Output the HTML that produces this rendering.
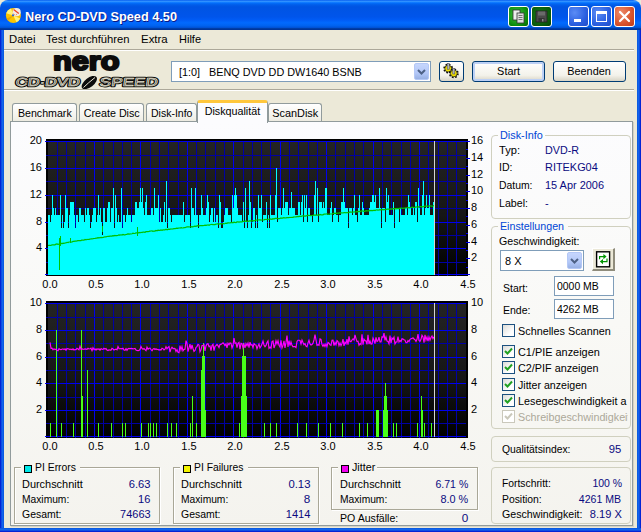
<!DOCTYPE html>
<html><head><meta charset="utf-8"><title>Nero CD-DVD Speed 4.50</title>
<style>
*{box-sizing:border-box;margin:0;padding:0}
html,body{width:641px;height:532px;overflow:hidden;background:#ece9d8}
body{font-family:"Liberation Sans",sans-serif;font-size:11px;color:#000;position:relative}
.abs,.t,.tk,.v{position:absolute;white-space:nowrap}
.t{transform-origin:0 50%}.v{transform-origin:0 50%}.v.r{transform-origin:100% 50%}
.c{display:inline-block;transform-origin:50% 50%;white-space:nowrap}
.t{font-size:11px;line-height:14px}
.v{font-size:11px;line-height:14px;color:#0a0a80}
.tk{font-size:11px;line-height:14px}
.xc{width:24px;text-align:center}
#win{position:absolute;left:0;top:0;width:641px;height:532px;background:#ece9d8}
#title{position:absolute;left:0;top:0;width:641px;height:30px;border-radius:8px 8px 0 0;
background:linear-gradient(to bottom,#0058ee 0%,#3593ff 4%,#288eff 6%,#127dff 8%,#036ffc 10%,#0262ee 14%,#0057e5 20%,#0054e3 24%,#0055eb 56%,#005bf5 66%,#026afe 76%,#0062ef 86%,#0052d6 92%,#0040ab 94%,#003092 100%)}
#title .cap{position:absolute;left:24.7px;top:8.5px;color:#fff;font-weight:bold;font-size:13.7px;line-height:16px;text-shadow:1px 1px 0 #0a1883;transform-origin:0 50%;white-space:nowrap}
.bl{position:absolute;left:0;top:30px;width:4px;height:502px;background:linear-gradient(to right,#0019cf 0%,#0831d9 25%,#166aee 50%,#0855dd 100%)}
.br{position:absolute;left:637px;top:30px;width:4px;height:502px;background:linear-gradient(to left,#0019cf 0%,#0831d9 25%,#166aee 50%,#0855dd 100%)}
.bb{position:absolute;left:0;top:528px;width:641px;height:4px;background:linear-gradient(to top,#0019cf 0%,#0831d9 25%,#166aee 50%,#0855dd 100%)}
.cb{position:absolute;top:6px;width:21px;height:21px;border:1px solid #fff;border-radius:3px}
.menu{position:absolute;top:32px;font-size:11px;line-height:14px;transform-origin:0 50%;white-space:nowrap}
.hsep{position:absolute;left:4px;width:630px;height:2px;border-top:1px solid #aca899;border-bottom:1px solid #fff}
.combo{position:absolute;background:#fff;border:1px solid #7f9db9}
.dd{position:absolute;width:15px;height:17px;border-radius:2px;border:1px solid #b4c8f6;background:linear-gradient(to bottom,#c6d6fd,#b3c8f8 60%,#98b1e4)}
.btn{position:absolute;border:1px solid #003c74;border-radius:3px;background:linear-gradient(to bottom,#fff 0%,#f3f2ea 70%,#d8d4c5 100%);text-align:center;font-size:11px;line-height:19px}
.tab{position:absolute;top:103px;height:19px;border:1px solid #919b9c;border-bottom:none;border-radius:3px 3px 0 0;background:linear-gradient(to bottom,#fff,#f1f0e8 80%,#ebe9dd);font-size:11px;line-height:19px;text-align:center}
.tab.sel{top:100px;height:23px;background:#fcfcfe;border-top:3px solid #ffc73c;line-height:17px;z-index:3;border-top-left-radius:3px;border-top-right-radius:3px}
#panel{position:absolute;left:10px;top:121px;width:623px;height:405px;border:1px solid #919b9c;box-shadow:1px 1px 0 #d5d2c4;background:linear-gradient(to bottom,#fcfcfe 0%,#f9f9f6 50%,#f4f3ee 100%)}
.grp{position:absolute;border:1px solid #d0d0bf;border-radius:4px}
.grp.sq{border-radius:0;border-color:#a9a797;box-shadow:inset 1px 1px 0 #fff,1px 1px 0 #fff}
.grp .lg{position:absolute;left:6px;top:-8px;background:#fbfbf8;color:#0046d5;font-size:11px;line-height:14px;padding:0 2px;white-space:nowrap}
.grp .lg.blk{color:#000}
.inp{position:absolute;background:#fff;border:1px solid #7f9db9;font-size:11px;line-height:19px;padding-left:2.3px;white-space:nowrap}
.chk{position:absolute;width:13px;height:13px;border:1px solid #1c5180;background:linear-gradient(135deg,#dcdcd7,#fff 70%)}
.chk svg{position:absolute;left:1px;top:1px}
.sw{display:inline-block;width:8px;height:8px;border:1px solid #000;vertical-align:-1.5px;margin-right:2.5px;margin-left:1px}
</style></head><body>
<div id="win">
<div id="title">
  <svg class="abs" style="left:5px;top:7px" width="17" height="17" viewBox="0 0 17 17"><circle cx="8.4" cy="8.5" r="7.5" fill="#fcc400"/><path d="M8.4 8.5L1.2 6.2A7.5 7.5 0 0 1 6 1.4Z" fill="#fff27a"/><path d="M8.4 8.5L15.2 11.5A7.5 7.5 0 0 1 11.5 15.3Z" fill="#fff27a"/><path d="M8.4 8.5L3.2 13.8A7.5 7.5 0 0 1 1.5 11.5Z" fill="#e8a800"/><circle cx="11.6" cy="5.2" r="4.1" fill="#f1ede6"/><path d="M8.6 2.4L13.8 6.4" stroke="#f04020" stroke-width="1.3"/><path d="M8.5 6.5l1.2 1.6M11 8.3l.8-1.4" stroke="#f07850" stroke-width=".8"/><circle cx="8" cy="8.3" r="1.1" fill="#2a62d8"/></svg>
  <div class="cap" style="transform:scaleX(0.9294)">Nero CD-DVD Speed 4.50</div>
  <div class="cb" style="left:508px;background:radial-gradient(circle at 40% 40%,#3fc03f,#0a8a0a 70%,#066006)"><svg width="19" height="19" viewBox="0 0 19 19"><rect x="4" y="3" width="7" height="10" fill="#eee" stroke="#333" stroke-width=".8"/><rect x="8" y="6" width="7" height="10" fill="#ddd" stroke="#333" stroke-width=".8"/><path d="M9.5 8.5h4M9.5 10.5h4M9.5 12.5h4" stroke="#555" stroke-width=".8"/></svg></div>
  <div class="cb" style="left:531px;background:radial-gradient(circle at 40% 40%,#187a18,#0a5a0a 70%,#053f05)"><svg width="19" height="19" viewBox="0 0 19 19"><rect x="4" y="4" width="11" height="11" fill="#4a4a4a" stroke="#222" stroke-width=".8"/><rect x="6" y="4.5" width="7" height="4" fill="#6a6a6a"/><rect x="6.5" y="11" width="6" height="4" fill="#333"/><rect x="10" y="12" width="1.5" height="2.5" fill="#888"/></svg></div>
  <div class="cb" style="left:568px;background:radial-gradient(circle at 30% 30%,#5b8cf5,#2a5fe0 60%,#1f4cc8)"><div class="abs" style="left:5px;top:12px;width:7px;height:3px;background:#fff"></div></div>
  <div class="cb" style="left:591px;background:radial-gradient(circle at 30% 30%,#5b8cf5,#2a5fe0 60%,#1f4cc8)"><div class="abs" style="left:4px;top:4px;width:11px;height:11px;border:1px solid #fff;border-top-width:3px"></div></div>
  <div class="cb" style="left:614px;background:radial-gradient(circle at 30% 30%,#ee8a6a,#d9532c 60%,#c03a18)"><svg width="19" height="19" viewBox="0 0 19 19"><path d="M5 5L14 14M14 5L5 14" stroke="#fff" stroke-width="2.2" stroke-linecap="round"/></svg></div>
</div>
<div class="bl"></div><div class="br"></div><div class="bb"></div>

<div class="menu" style="transform:scaleX(1.0277);left:8.5px">Datei</div>
<div class="menu" style="transform:scaleX(1.0191);left:46.2px">Test durchführen</div>
<div class="menu" style="transform:scaleX(1.0394);left:140.7px">Extra</div>
<div class="menu" style="transform:scaleX(0.9993);left:178.8px">Hilfe</div>
<div class="hsep" style="top:49px"></div>

<!-- logo -->
<svg class="abs" style="left:10px;top:50px" width="155" height="40" viewBox="0 0 155 40">
  <text x="76.2" y="20.3" text-anchor="middle" font-family="Liberation Sans" font-weight="bold" font-size="25.6" textLength="66.5" lengthAdjust="spacingAndGlyphs" stroke="#0c0c0c" stroke-width="2.1" stroke-linejoin="round" fill="#0c0c0c">nero</text>
  <g font-family="Liberation Sans" font-size="11.7" fill="none" stroke-linejoin="round" transform="skewX(-8)">
  <g stroke="#0c0c0c" stroke-width="2.6"><text x="10.5" y="36.5" textLength="64" lengthAdjust="spacingAndGlyphs">CD·DVD</text>
  <text x="94.5" y="36.5" textLength="58" lengthAdjust="spacingAndGlyphs">SPEED</text></g>
  <g stroke="#ece9d8" stroke-width="0.6"><text x="10.5" y="36.5" textLength="64" lengthAdjust="spacingAndGlyphs">CD·DVD</text>
  <text x="94.5" y="36.5" textLength="58" lengthAdjust="spacingAndGlyphs">SPEED</text></g></g>
  <ellipse cx="79.3" cy="32.6" rx="9" ry="4.6" transform="rotate(-38 79.3 32.6)" fill="#0c0c0c"/>
  <path d="M73.5 37.5 Q78 33 85 27.5" stroke="#ece9d8" stroke-width="1" fill="none"/>
</svg>

<div class="combo" style="left:171px;top:61px;width:260px;height:21px"><div class="t" style="transform:scaleX(0.9834);left:6.5px;top:3px">[1:0]&nbsp;&nbsp;&nbsp;BENQ DVD DD DW1640 BSNB</div>
  <div class="dd" style="left:242px;top:1px"><svg width="13" height="15" viewBox="0 0 13 15"><path d="M3 6l3.5 3.5L10 6" stroke="#4d6185" stroke-width="2" fill="none"/></svg></div></div>
<div class="btn" style="left:439px;top:61px;width:25px;height:21px"><svg width="23" height="19" viewBox="0 0 23 19" style="display:block"><g><circle cx="8.2" cy="6.6" r="4" fill="none" stroke="#111" stroke-width="1.9" stroke-dasharray="1.7 1.45"/><circle cx="8.2" cy="6.6" r="3.4" fill="#f0e000" stroke="#111" stroke-width=".7"/><rect x="7.2" y="1.6" width="2" height="5.6" fill="#b9bcc8" stroke="#50505a" stroke-width=".6"/><circle cx="13.8" cy="11.4" r="4" fill="none" stroke="#111" stroke-width="1.9" stroke-dasharray="1.7 1.45"/><circle cx="13.8" cy="11.4" r="3.4" fill="#f0e000" stroke="#111" stroke-width=".7"/><rect x="12.8" y="6.4" width="2" height="5.6" fill="#b9bcc8" stroke="#50505a" stroke-width=".6"/></g></svg></div>
<div class="btn" style="left:472px;top:61px;width:73px;height:21px;box-shadow:inset 0 0 0 2px #bcd0f5"><span class="c" style="transform:scaleX(0.9899)">Start</span></div>
<div class="btn" style="left:553px;top:61px;width:73px;height:21px"><span class="c" style="transform:scaleX(0.9921)">Beenden</span></div>
<div class="hsep" style="top:89px"></div>

<!-- tabs -->
<div class="tab" style="left:12px;width:65px"><span class="c" style="transform:scaleX(0.9660)">Benchmark</span></div>
<div class="tab" style="left:79px;width:65px"><span class="c" style="transform:scaleX(0.9744)">Create Disc</span></div>
<div class="tab" style="left:146px;width:51px"><span class="c" style="transform:scaleX(0.9561)">Disk-Info</span></div>
<div class="tab" style="left:268px;width:54px"><span class="c" style="transform:scaleX(0.9899)">ScanDisk</span></div>
<div id="panel"></div>
<div class="tab sel" style="left:197px;width:71px"><span class="c" style="transform:scaleX(0.9761)">Diskqualität</span></div>

<!-- charts -->
<svg class="abs" style="left:0;top:0;z-index:4" width="641" height="532" viewBox="0 0 641 532" shape-rendering="crispEdges">
  <defs><linearGradient id="bg" x1="0" y1="0" x2="0" y2="1"><stop offset="0" stop-color="#242424"/><stop offset="0.55" stop-color="#161616"/><stop offset="1" stop-color="#000"/></linearGradient></defs>
  <rect x="46" y="139" width="422" height="137" fill="#000"/>
  <rect x="48" y="141" width="418" height="134" fill="url(#bg)"/>
  <rect x="57" y="141" width="1" height="135" fill="#0000a4"/>
<rect x="66" y="141" width="1" height="135" fill="#0000a4"/>
<rect x="75" y="141" width="1" height="135" fill="#0000a4"/>
<rect x="85" y="141" width="1" height="135" fill="#0000a4"/>
<rect x="94" y="141" width="1" height="135" fill="#0000ee"/>
<rect x="103" y="141" width="1" height="135" fill="#0000a4"/>
<rect x="113" y="141" width="1" height="135" fill="#0000a4"/>
<rect x="122" y="141" width="1" height="135" fill="#0000a4"/>
<rect x="131" y="141" width="1" height="135" fill="#0000a4"/>
<rect x="140" y="141" width="1" height="135" fill="#0000ee"/>
<rect x="150" y="141" width="1" height="135" fill="#0000a4"/>
<rect x="159" y="141" width="1" height="135" fill="#0000a4"/>
<rect x="168" y="141" width="1" height="135" fill="#0000a4"/>
<rect x="178" y="141" width="1" height="135" fill="#0000a4"/>
<rect x="187" y="141" width="1" height="135" fill="#0000ee"/>
<rect x="196" y="141" width="1" height="135" fill="#0000a4"/>
<rect x="205" y="141" width="1" height="135" fill="#0000a4"/>
<rect x="215" y="141" width="1" height="135" fill="#0000a4"/>
<rect x="224" y="141" width="1" height="135" fill="#0000a4"/>
<rect x="233" y="141" width="1" height="135" fill="#0000ee"/>
<rect x="243" y="141" width="1" height="135" fill="#0000a4"/>
<rect x="252" y="141" width="1" height="135" fill="#0000a4"/>
<rect x="261" y="141" width="1" height="135" fill="#0000a4"/>
<rect x="270" y="141" width="1" height="135" fill="#0000a4"/>
<rect x="280" y="141" width="1" height="135" fill="#0000ee"/>
<rect x="289" y="141" width="1" height="135" fill="#0000a4"/>
<rect x="298" y="141" width="1" height="135" fill="#0000a4"/>
<rect x="308" y="141" width="1" height="135" fill="#0000a4"/>
<rect x="317" y="141" width="1" height="135" fill="#0000a4"/>
<rect x="326" y="141" width="1" height="135" fill="#0000ee"/>
<rect x="335" y="141" width="1" height="135" fill="#0000a4"/>
<rect x="345" y="141" width="1" height="135" fill="#0000a4"/>
<rect x="354" y="141" width="1" height="135" fill="#0000a4"/>
<rect x="363" y="141" width="1" height="135" fill="#0000a4"/>
<rect x="373" y="141" width="1" height="135" fill="#0000ee"/>
<rect x="382" y="141" width="1" height="135" fill="#0000a4"/>
<rect x="391" y="141" width="1" height="135" fill="#0000a4"/>
<rect x="401" y="141" width="1" height="135" fill="#0000a4"/>
<rect x="410" y="141" width="1" height="135" fill="#0000a4"/>
<rect x="419" y="141" width="1" height="135" fill="#0000ee"/>
<rect x="428" y="141" width="1" height="135" fill="#0000a4"/>
<rect x="438" y="141" width="1" height="135" fill="#0000a4"/>
<rect x="447" y="141" width="1" height="135" fill="#0000a4"/>
<rect x="456" y="141" width="1" height="135" fill="#0000a4"/>
<rect x="45" y="141" width="421" height="1" fill="#0000ee"/>
<rect x="46" y="155" width="420" height="1" fill="#0000a4"/>
<rect x="45" y="168" width="421" height="1" fill="#0000ee"/>
<rect x="46" y="181" width="420" height="1" fill="#0000a4"/>
<rect x="45" y="195" width="421" height="1" fill="#0000ee"/>
<rect x="46" y="208" width="420" height="1" fill="#0000a4"/>
<rect x="45" y="222" width="421" height="1" fill="#0000ee"/>
<rect x="46" y="235" width="420" height="1" fill="#0000a4"/>
<rect x="45" y="248" width="421" height="1" fill="#0000ee"/>
<rect x="46" y="262" width="420" height="1" fill="#0000a4"/>
<rect x="45" y="274" width="421" height="1" fill="#0000ee"/>
  <rect x="466" y="139" width="2" height="137" fill="#000"/>
  <rect x="466" y="141" width="4" height="1" fill="#0000ee"/>
<rect x="466" y="149" width="2" height="1" fill="#0000ee"/>
<rect x="466" y="158" width="4" height="1" fill="#0000ee"/>
<rect x="466" y="166" width="2" height="1" fill="#0000ee"/>
<rect x="466" y="175" width="4" height="1" fill="#0000ee"/>
<rect x="466" y="183" width="2" height="1" fill="#0000ee"/>
<rect x="466" y="191" width="4" height="1" fill="#0000ee"/>
<rect x="466" y="200" width="2" height="1" fill="#0000ee"/>
<rect x="466" y="208" width="4" height="1" fill="#0000ee"/>
<rect x="466" y="216" width="2" height="1" fill="#0000ee"/>
<rect x="466" y="225" width="4" height="1" fill="#0000ee"/>
<rect x="466" y="233" width="2" height="1" fill="#0000ee"/>
<rect x="466" y="242" width="4" height="1" fill="#0000ee"/>
<rect x="466" y="250" width="2" height="1" fill="#0000ee"/>
<rect x="466" y="258" width="4" height="1" fill="#0000ee"/>
<rect x="466" y="267" width="2" height="1" fill="#0000ee"/>
<rect x="466" y="274" width="4" height="1" fill="#0000ee"/>
  <path d="M48,275 L48,215 L49,215 L49,215 L50,215 L50,222 L51,222 L51,215 L52,215 L52,195 L53,195 L53,208 L54,208 L54,215 L55,215 L55,208 L56,208 L56,215 L57,215 L57,215 L58,215 L58,215 L59,215 L59,215 L60,215 L60,195 L61,195 L61,228 L62,228 L62,215 L63,215 L63,228 L64,228 L64,222 L65,222 L65,195 L66,195 L66,208 L67,208 L67,208 L68,208 L68,228 L69,228 L69,215 L70,215 L70,202 L71,202 L71,202 L72,202 L72,202 L73,202 L73,202 L74,202 L74,215 L75,215 L75,228 L76,228 L76,215 L77,215 L77,215 L78,215 L78,222 L79,222 L79,208 L80,208 L80,208 L81,208 L81,215 L82,215 L82,215 L83,215 L83,215 L84,215 L84,222 L85,222 L85,208 L86,208 L86,215 L87,215 L87,208 L88,208 L88,208 L89,208 L89,215 L90,215 L90,228 L91,228 L91,222 L92,222 L92,215 L93,215 L93,208 L94,208 L94,208 L95,208 L95,208 L96,208 L96,222 L97,222 L97,215 L98,215 L98,195 L99,195 L99,215 L100,215 L100,208 L101,208 L101,222 L102,222 L102,235 L103,235 L103,208 L104,208 L104,208 L105,208 L105,222 L106,222 L106,222 L107,222 L107,208 L108,208 L108,202 L109,202 L109,202 L110,202 L110,222 L111,222 L111,208 L112,208 L112,208 L113,208 L113,188 L114,188 L114,228 L115,228 L115,195 L116,195 L116,208 L117,208 L117,222 L118,222 L118,215 L119,215 L119,222 L120,222 L120,222 L121,222 L121,188 L122,188 L122,228 L123,228 L123,215 L124,215 L124,215 L125,215 L125,222 L126,222 L126,215 L127,215 L127,208 L128,208 L128,215 L129,215 L129,215 L130,215 L130,215 L131,215 L131,222 L132,222 L132,215 L133,215 L133,215 L134,215 L134,215 L135,215 L135,202 L136,202 L136,202 L137,202 L137,208 L138,208 L138,208 L139,208 L139,202 L140,202 L140,188 L141,188 L141,202 L142,202 L142,188 L143,188 L143,208 L144,208 L144,215 L145,215 L145,202 L146,202 L146,195 L147,195 L147,215 L148,215 L148,215 L149,215 L149,215 L150,215 L150,215 L151,215 L151,208 L152,208 L152,208 L153,208 L153,215 L154,215 L154,188 L155,188 L155,208 L156,208 L156,208 L157,208 L157,208 L158,208 L158,195 L159,195 L159,222 L160,222 L160,208 L161,208 L161,222 L162,222 L162,222 L163,222 L163,215 L164,215 L164,202 L165,202 L165,222 L166,222 L166,181 L167,181 L167,228 L168,228 L168,208 L169,208 L169,208 L170,208 L170,215 L171,215 L171,222 L172,222 L172,215 L173,215 L173,215 L174,215 L174,215 L175,215 L175,215 L176,215 L176,215 L177,215 L177,215 L178,215 L178,215 L179,215 L179,215 L180,215 L180,215 L181,215 L181,215 L182,215 L182,215 L183,215 L183,202 L184,202 L184,222 L185,222 L185,215 L186,215 L186,215 L187,215 L187,215 L188,215 L188,215 L189,215 L189,215 L190,215 L190,228 L191,228 L191,188 L192,188 L192,208 L193,208 L193,208 L194,208 L194,215 L195,215 L195,188 L196,188 L196,215 L197,215 L197,215 L198,215 L198,228 L199,228 L199,215 L200,215 L200,215 L201,215 L201,195 L202,195 L202,208 L203,208 L203,215 L204,215 L204,215 L205,215 L205,215 L206,215 L206,208 L207,208 L207,195 L208,195 L208,202 L209,202 L209,222 L210,222 L210,215 L211,215 L211,208 L212,208 L212,208 L213,208 L213,222 L214,222 L214,208 L215,208 L215,222 L216,222 L216,215 L217,215 L217,215 L218,215 L218,228 L219,228 L219,195 L220,195 L220,202 L221,202 L221,228 L222,228 L222,228 L223,228 L223,222 L224,222 L224,215 L225,215 L225,208 L226,208 L226,208 L227,208 L227,208 L228,208 L228,215 L229,215 L229,215 L230,215 L230,215 L231,215 L231,222 L232,222 L232,195 L233,195 L233,208 L234,208 L234,195 L235,195 L235,188 L236,188 L236,195 L237,195 L237,208 L238,208 L238,215 L239,215 L239,215 L240,215 L240,215 L241,215 L241,215 L242,215 L242,222 L243,222 L243,202 L244,202 L244,228 L245,228 L245,188 L246,188 L246,222 L247,222 L247,228 L248,228 L248,215 L249,215 L249,181 L250,181 L250,202 L251,202 L251,228 L252,228 L252,222 L253,222 L253,208 L254,208 L254,208 L255,208 L255,228 L256,228 L256,215 L257,215 L257,228 L258,228 L258,195 L259,195 L259,208 L260,208 L260,208 L261,208 L261,195 L262,195 L262,222 L263,222 L263,215 L264,215 L264,215 L265,215 L265,215 L266,215 L266,202 L267,202 L267,228 L268,228 L268,215 L269,215 L269,228 L270,228 L270,195 L271,195 L271,215 L272,215 L272,215 L273,215 L273,215 L274,215 L274,215 L275,215 L275,195 L276,195 L276,168 L277,168 L277,222 L278,222 L278,208 L279,208 L279,208 L280,208 L280,208 L281,208 L281,215 L282,215 L282,208 L283,208 L283,188 L284,188 L284,208 L285,208 L285,202 L286,202 L286,202 L287,202 L287,202 L288,202 L288,215 L289,215 L289,208 L290,208 L290,208 L291,208 L291,192 L292,192 L292,208 L293,208 L293,208 L294,208 L294,208 L295,208 L295,215 L296,215 L296,215 L297,215 L297,215 L298,215 L298,202 L299,202 L299,202 L300,202 L300,215 L301,215 L301,202 L302,202 L302,195 L303,195 L303,222 L304,222 L304,195 L305,195 L305,208 L306,208 L306,195 L307,195 L307,222 L308,222 L308,208 L309,208 L309,208 L310,208 L310,215 L311,215 L311,215 L312,215 L312,222 L313,222 L313,215 L314,215 L314,195 L315,195 L315,181 L316,181 L316,215 L317,215 L317,188 L318,188 L318,222 L319,222 L319,202 L320,202 L320,202 L321,202 L321,202 L322,202 L322,208 L323,208 L323,202 L324,202 L324,208 L325,208 L325,188 L326,188 L326,188 L327,188 L327,215 L328,215 L328,215 L329,215 L329,215 L330,215 L330,208 L331,208 L331,202 L332,202 L332,222 L333,222 L333,215 L334,215 L334,208 L335,208 L335,208 L336,208 L336,215 L337,215 L337,215 L338,215 L338,222 L339,222 L339,215 L340,215 L340,215 L341,215 L341,202 L342,202 L342,202 L343,202 L343,188 L344,188 L344,202 L345,202 L345,208 L346,208 L346,208 L347,208 L347,208 L348,208 L348,228 L349,228 L349,208 L350,208 L350,208 L351,208 L351,208 L352,208 L352,215 L353,215 L353,208 L354,208 L354,195 L355,195 L355,215 L356,215 L356,215 L357,215 L357,222 L358,222 L358,208 L359,208 L359,195 L360,195 L360,215 L361,215 L361,215 L362,215 L362,202 L363,202 L363,208 L364,208 L364,215 L365,215 L365,215 L366,215 L366,215 L367,215 L367,215 L368,215 L368,215 L369,215 L369,208 L370,208 L370,202 L371,202 L371,202 L372,202 L372,195 L373,195 L373,195 L374,195 L374,202 L375,202 L375,195 L376,195 L376,208 L377,208 L377,208 L378,208 L378,208 L379,208 L379,188 L380,188 L380,208 L381,208 L381,228 L382,228 L382,208 L383,208 L383,208 L384,208 L384,208 L385,208 L385,222 L386,222 L386,188 L387,188 L387,202 L388,202 L388,195 L389,195 L389,215 L390,215 L390,215 L391,215 L391,215 L392,215 L392,215 L393,215 L393,202 L394,202 L394,228 L395,228 L395,208 L396,208 L396,208 L397,208 L397,208 L398,208 L398,208 L399,208 L399,222 L400,222 L400,208 L401,208 L401,215 L402,215 L402,215 L403,215 L403,215 L404,215 L404,215 L405,215 L405,208 L406,208 L406,208 L407,208 L407,215 L408,215 L408,195 L409,195 L409,202 L410,202 L410,208 L411,208 L411,215 L412,215 L412,215 L413,215 L413,208 L414,208 L414,215 L415,215 L415,202 L416,202 L416,202 L417,202 L417,222 L418,222 L418,188 L419,188 L419,208 L420,208 L420,215 L421,215 L421,215 L422,215 L422,195 L423,195 L423,181 L424,181 L424,215 L425,215 L425,208 L426,208 L426,195 L427,195 L427,208 L428,208 L428,208 L429,208 L429,195 L430,195 L430,215 L431,215 L431,215 L432,215 L432,215 L433,215 L433,202 L434,202 L434,202 L435,202 L435,275 Z" fill="#00ffff"/>
  <rect x="48" y="275" width="387" height="1" fill="#000"/>
  <polyline points="48,245.5 49,245.4 50,245.4 51,245.5 52,244.8 53,244.8 54,244.9 55,244.8 56,244.1 57,243.9 58,244.3 59,244.2 60,243.7 61,243.2 62,243.7 63,243.1 64,243.3 65,243.0 66,242.9 67,242.3 68,242.6 69,242.0 70,242.0 71,242.2 72,242.0 73,241.4 74,241.3 75,241.2 76,241.2 77,240.9 78,240.6 79,240.5 80,240.7 81,240.7 82,239.9 83,240.2 84,240.2 85,239.5 86,239.9 87,239.3 88,239.5 89,239.3 90,239.2 91,238.8 92,238.8 93,238.7 94,238.5 95,238.5 96,238.2 97,238.1 98,237.6 99,237.9 100,237.7 101,237.4 102,237.6 103,237.5 104,237.1 105,236.8 106,236.9 107,236.5 108,236.4 109,236.4 110,236.1 111,236.2 112,236.1 113,235.6 114,235.9 115,235.4 116,235.7 117,235.6 118,235.3 119,234.9 120,235.1 121,234.8 122,235.1 123,234.4 124,234.8 125,234.8 126,234.5 127,234.4 128,233.8 129,234.3 130,233.8 131,234.0 132,233.8 133,233.2 134,233.5 135,233.5 136,232.8 137,232.8 138,233.0 139,232.5 140,232.9 141,232.3 142,232.6 143,232.0 144,232.1 145,232.3 146,231.7 147,231.6 148,231.6 149,231.4 150,231.1 151,231.0 152,230.9 153,231.3 154,231.0 155,231.1 156,230.5 157,230.8 158,230.2 159,230.4 160,230.3 161,230.0 162,230.3 163,229.9 164,229.8 165,229.9 166,229.3 167,229.8 168,229.4 169,229.1 170,229.3 171,228.8 172,229.2 173,228.8 174,228.6 175,228.7 176,228.4 177,228.1 178,228.4 179,227.8 180,228.2 181,227.7 182,227.9 183,228.0 184,227.6 185,227.6 186,227.2 187,226.9 188,226.8 189,226.8 190,227.0 191,226.8 192,226.7 193,226.9 194,226.3 195,226.2 196,226.4 197,225.9 198,225.7 199,225.9 200,225.6 201,225.7 202,225.5 203,225.6 204,225.5 205,225.2 206,225.4 207,225.2 208,224.8 209,225.3 210,224.7 211,224.5 212,224.4 213,224.7 214,224.7 215,224.6 216,224.2 217,224.0 218,223.7 219,224.1 220,223.9 221,223.7 222,223.8 223,223.5 224,223.8 225,223.5 226,223.1 227,223.4 228,222.7 229,223.0 230,222.8 231,222.6 232,222.4 233,222.8 234,222.1 235,222.4 236,222.6 237,221.9 238,221.9 239,222.1 240,221.9 241,221.9 242,221.9 243,221.4 244,221.4 245,221.3 246,221.0 247,221.5 248,221.3 249,221.2 250,220.6 251,221.1 252,220.9 253,220.7 254,220.8 255,220.5 256,220.2 257,220.0 258,220.0 259,219.8 260,219.9 261,220.1 262,220.0 263,220.0 264,219.8 265,219.4 266,219.5 267,219.3 268,219.5 269,219.2 270,218.9 271,219.1 272,219.3 273,218.6 274,219.0 275,218.3 276,218.4 277,218.3 278,218.6 279,218.6 280,218.4 281,218.0 282,218.3 283,217.8 284,217.7 285,218.0 286,217.8 287,217.7 288,217.6 289,217.7 290,217.3 291,217.5 292,217.3 293,217.3 294,216.9 295,217.0 296,216.8 297,216.6 298,216.4 299,216.6 300,216.1 301,216.6 302,216.0 303,215.9 304,215.8 305,216.3 306,215.8 307,215.6 308,215.4 309,215.3 310,215.7 311,215.6 312,215.5 313,215.5 314,214.9 315,215.2 316,215.0 317,215.2 318,215.1 319,215.1 320,214.4 321,214.9 322,214.9 323,214.8 324,214.1 325,214.1 326,214.0 327,213.8 328,214.3 329,214.2 330,214.0 331,214.0 332,213.8 333,213.5 334,213.3 335,213.2 336,213.6 337,213.1 338,213.1 339,213.1 340,212.7 341,212.8 342,212.8 343,213.0 344,212.7 345,212.5 346,212.9 347,212.5 348,212.7 349,212.4 350,211.9 351,212.1 352,212.1 353,212.2 354,211.8 355,212.0 356,211.8 357,211.5 358,211.9 359,211.2 360,211.7 361,211.1 362,210.9 363,211.0 364,211.3 365,211.4 366,210.6 367,210.9 368,210.8 369,210.9 370,210.4 371,210.6 372,210.4 373,210.7 374,210.2 375,210.6 376,210.0 377,209.9 378,210.2 379,210.0 380,209.6 381,209.9 382,209.4 383,209.8 384,209.7 385,209.7 386,209.5 387,209.2 388,209.2 389,209.1 390,209.4 391,208.7 392,209.2 393,208.5 394,208.6 395,208.6 396,208.9 397,208.6 398,208.4 399,208.7 400,208.2 401,208.2 402,208.2 403,208.3 404,208.2 405,208.1 406,207.8 407,207.7 408,207.5 409,207.9 410,207.7 411,207.7 412,207.2 413,207.3 414,207.5 415,207.3 416,206.9 417,207.0 418,207.3 419,206.7 420,206.6 421,206.6 422,206.8 423,206.9 424,206.3 425,206.2 426,206.2 427,206.2 428,206.3 429,205.9 430,206.0 431,205.8 432,206.3 433,206.0 434,205.5" fill="none" stroke="#00c000" stroke-width="1.2" shape-rendering="auto"/>
  <path d="M59.5 238V270M60.5 236V246M102.5 226V232M137.5 227V236M70.5 238V243" stroke="#00c400" stroke-width="1"/>
  <rect x="434" y="141" width="1" height="134" fill="#d4d4d4"/>

  <rect x="46" y="301" width="422" height="137" fill="#000"/>
  <rect x="48" y="303" width="418" height="134" fill="url(#bg)"/>
  <rect x="57" y="303" width="1" height="135" fill="#0000a4"/>
<rect x="66" y="303" width="1" height="135" fill="#0000a4"/>
<rect x="75" y="303" width="1" height="135" fill="#0000a4"/>
<rect x="85" y="303" width="1" height="135" fill="#0000a4"/>
<rect x="94" y="303" width="1" height="135" fill="#0000ee"/>
<rect x="103" y="303" width="1" height="135" fill="#0000a4"/>
<rect x="113" y="303" width="1" height="135" fill="#0000a4"/>
<rect x="122" y="303" width="1" height="135" fill="#0000a4"/>
<rect x="131" y="303" width="1" height="135" fill="#0000a4"/>
<rect x="140" y="303" width="1" height="135" fill="#0000ee"/>
<rect x="150" y="303" width="1" height="135" fill="#0000a4"/>
<rect x="159" y="303" width="1" height="135" fill="#0000a4"/>
<rect x="168" y="303" width="1" height="135" fill="#0000a4"/>
<rect x="178" y="303" width="1" height="135" fill="#0000a4"/>
<rect x="187" y="303" width="1" height="135" fill="#0000ee"/>
<rect x="196" y="303" width="1" height="135" fill="#0000a4"/>
<rect x="205" y="303" width="1" height="135" fill="#0000a4"/>
<rect x="215" y="303" width="1" height="135" fill="#0000a4"/>
<rect x="224" y="303" width="1" height="135" fill="#0000a4"/>
<rect x="233" y="303" width="1" height="135" fill="#0000ee"/>
<rect x="243" y="303" width="1" height="135" fill="#0000a4"/>
<rect x="252" y="303" width="1" height="135" fill="#0000a4"/>
<rect x="261" y="303" width="1" height="135" fill="#0000a4"/>
<rect x="270" y="303" width="1" height="135" fill="#0000a4"/>
<rect x="280" y="303" width="1" height="135" fill="#0000ee"/>
<rect x="289" y="303" width="1" height="135" fill="#0000a4"/>
<rect x="298" y="303" width="1" height="135" fill="#0000a4"/>
<rect x="308" y="303" width="1" height="135" fill="#0000a4"/>
<rect x="317" y="303" width="1" height="135" fill="#0000a4"/>
<rect x="326" y="303" width="1" height="135" fill="#0000ee"/>
<rect x="335" y="303" width="1" height="135" fill="#0000a4"/>
<rect x="345" y="303" width="1" height="135" fill="#0000a4"/>
<rect x="354" y="303" width="1" height="135" fill="#0000a4"/>
<rect x="363" y="303" width="1" height="135" fill="#0000a4"/>
<rect x="373" y="303" width="1" height="135" fill="#0000ee"/>
<rect x="382" y="303" width="1" height="135" fill="#0000a4"/>
<rect x="391" y="303" width="1" height="135" fill="#0000a4"/>
<rect x="401" y="303" width="1" height="135" fill="#0000a4"/>
<rect x="410" y="303" width="1" height="135" fill="#0000a4"/>
<rect x="419" y="303" width="1" height="135" fill="#0000ee"/>
<rect x="428" y="303" width="1" height="135" fill="#0000a4"/>
<rect x="438" y="303" width="1" height="135" fill="#0000a4"/>
<rect x="447" y="303" width="1" height="135" fill="#0000a4"/>
<rect x="456" y="303" width="1" height="135" fill="#0000a4"/>
<rect x="45" y="303" width="421" height="1" fill="#0000ee"/>
<rect x="46" y="317" width="420" height="1" fill="#0000a4"/>
<rect x="45" y="330" width="421" height="1" fill="#0000ee"/>
<rect x="46" y="343" width="420" height="1" fill="#0000a4"/>
<rect x="45" y="357" width="421" height="1" fill="#0000ee"/>
<rect x="46" y="370" width="420" height="1" fill="#0000a4"/>
<rect x="45" y="383" width="421" height="1" fill="#0000ee"/>
<rect x="46" y="397" width="420" height="1" fill="#0000a4"/>
<rect x="45" y="410" width="421" height="1" fill="#0000ee"/>
<rect x="46" y="423" width="420" height="1" fill="#0000a4"/>
<rect x="45" y="436" width="421" height="1" fill="#0000ee"/>
  <rect x="466" y="301" width="2" height="137" fill="#000"/>
  <g fill="#48ff18"><rect x="50" y="423" width="1" height="14"/>
<rect x="61" y="423" width="1" height="14"/>
<rect x="73" y="423" width="1" height="14"/>
<rect x="98" y="423" width="1" height="14"/>
<rect x="111" y="423" width="1" height="14"/>
<rect x="122" y="423" width="1" height="14"/>
<rect x="125" y="423" width="1" height="14"/>
<rect x="141" y="423" width="1" height="14"/>
<rect x="148" y="423" width="1" height="14"/>
<rect x="150" y="423" width="1" height="14"/>
<rect x="153" y="423" width="1" height="14"/>
<rect x="156" y="423" width="1" height="14"/>
<rect x="167" y="423" width="1" height="14"/>
<rect x="171" y="423" width="1" height="14"/>
<rect x="176" y="423" width="1" height="14"/>
<rect x="190" y="423" width="1" height="14"/>
<rect x="196" y="423" width="1" height="14"/>
<rect x="239" y="423" width="1" height="14"/>
<rect x="264" y="423" width="1" height="14"/>
<rect x="270" y="423" width="1" height="14"/>
<rect x="276" y="423" width="1" height="14"/>
<rect x="297" y="423" width="1" height="14"/>
<rect x="306" y="423" width="1" height="14"/>
<rect x="318" y="423" width="1" height="14"/>
<rect x="330" y="423" width="1" height="14"/>
<rect x="342" y="423" width="1" height="14"/>
<rect x="359" y="423" width="1" height="14"/>
<rect x="367" y="423" width="1" height="14"/>
<rect x="393" y="423" width="1" height="14"/>
<rect x="396" y="423" width="1" height="14"/>
<rect x="417" y="423" width="1" height="14"/>
<rect x="424" y="423" width="1" height="14"/>
<rect x="431" y="423" width="1" height="14"/>
<rect x="56" y="330" width="1" height="107"/>
<rect x="81" y="330" width="1" height="107"/>
<rect x="82" y="396" width="1" height="41"/>
<rect x="87" y="370" width="1" height="67"/>
<rect x="192" y="396" width="1" height="41"/>
<rect x="201" y="370" width="1" height="67"/>
<rect x="202" y="356" width="1" height="81"/>
<rect x="203" y="343" width="1" height="94"/>
<rect x="204" y="356" width="1" height="81"/>
<rect x="205" y="410" width="1" height="27"/>
<rect x="241" y="396" width="1" height="41"/>
<rect x="242" y="356" width="1" height="81"/>
<rect x="243" y="343" width="1" height="94"/>
<rect x="244" y="356" width="1" height="81"/>
<rect x="245" y="356" width="1" height="81"/>
<rect x="246" y="396" width="1" height="41"/>
<rect x="376" y="410" width="3" height="27"/>
<rect x="383" y="410" width="1" height="27"/>
<rect x="384" y="396" width="1" height="41"/>
<rect x="385" y="383" width="1" height="54"/>
<rect x="386" y="396" width="1" height="41"/>
<rect x="387" y="410" width="1" height="27"/>
<rect x="421" y="396" width="1" height="41"/>
<rect x="422" y="410" width="1" height="27"/></g>
  <polyline points="50,342.4 51,348.4 52,348.2 53,349.8 54,348.7 55,349.6 56,349.1 57,350.2 58,350.7 59,348.7 60,349.5 61,349.6 62,349.2 63,348.8 64,349.6 65,348.8 66,350.2 67,348.4 68,348.9 69,349.0 70,349.6 71,349.1 72,349.7 73,348.9 74,350.1 75,349.6 76,349.7 77,348.3 78,349.0 79,349.8 80,346.2 81,349.3 82,348.7 83,349.4 84,349.3 85,348.9 86,349.1 87,349.4 88,348.3 89,349.0 90,348.8 91,348.2 92,350.6 93,347.7 94,349.7 95,348.9 96,350.1 97,348.8 98,349.4 99,348.7 100,350.2 101,348.7 102,349.1 103,349.3 104,348.2 105,349.1 106,348.6 107,350.0 108,350.5 109,349.8 110,350.1 111,350.1 112,348.3 113,348.9 114,350.1 115,349.5 116,349.1 117,349.8 118,346.5 119,348.6 120,348.7 121,348.6 122,348.8 123,348.3 124,350.1 125,350.4 126,348.7 127,350.4 128,348.7 129,348.4 130,348.7 131,348.4 132,348.6 133,348.9 134,348.8 135,348.4 136,350.1 137,350.4 138,350.6 139,350.4 140,349.5 141,346.5 142,348.5 143,349.3 144,348.5 145,349.7 146,350.6 147,347.1 148,349.2 149,348.3 150,348.2 151,349.5 152,350.7 153,349.1 154,348.5 155,349.5 156,348.7 157,349.6 158,349.3 159,350.0 160,349.7 161,350.1 162,348.2 163,348.7 164,349.9 165,349.2 166,346.7 167,348.9 168,347.3 169,346.6 170,352.1 171,348.7 172,347.2 173,348.6 174,348.4 175,348.6 176,351.6 177,349.6 178,352.4 179,352.8 180,345.7 181,350.0 182,346.6 183,350.8 184,349.4 185,349.3 186,340.6 187,343.4 188,351.6 189,347.9 190,344.2 191,349.3 192,344.9 193,348.5 194,351.4 195,350.5 196,347.3 197,346.6 198,344.3 199,345.0 200,351.8 201,349.9 202,345.6 203,345.5 204,344.8 205,350.9 206,345.9 207,344.0 208,343.7 209,346.6 210,346.1 211,350.6 212,345.4 213,344.3 214,350.6 215,346.4 216,345.6 217,344.5 218,345.7 219,347.5 220,344.5 221,344.4 222,343.6 223,342.8 224,343.9 225,345.6 226,343.8 227,347.9 228,343.2 229,344.8 230,343.0 231,343.2 232,348.0 233,345.3 234,338.2 235,343.3 236,342.9 237,347.7 238,343.4 239,342.5 240,349.1 241,343.3 242,343.7 243,347.8 244,344.2 245,347.9 246,343.5 247,345.8 248,343.0 249,347.6 250,342.2 251,345.2 252,344.6 253,347.7 254,343.6 255,344.7 256,345.0 257,348.8 258,346.1 259,344.0 260,347.8 261,346.2 262,344.1 263,341.0 264,345.0 265,346.8 266,345.4 267,342.6 268,341.0 269,348.4 270,347.2 271,348.2 272,341.6 273,341.0 274,348.0 275,345.3 276,340.8 277,343.9 278,340.7 279,345.2 280,347.0 281,340.3 282,347.9 283,345.4 284,340.9 285,347.8 286,342.4 287,335.5 288,346.9 289,340.5 290,345.6 291,341.8 292,345.3 293,346.9 294,346.5 295,346.6 296,347.6 297,341.5 298,340.2 299,340.2 300,340.5 301,344.0 302,340.1 303,342.5 304,344.7 305,343.6 306,346.2 307,346.9 308,342.9 309,340.3 310,343.9 311,345.0 312,344.5 313,343.2 314,339.9 315,334.5 316,339.9 317,345.3 318,344.7 319,345.3 320,338.9 321,339.4 322,344.5 323,346.3 324,344.4 325,346.6 326,343.9 327,346.6 328,342.4 329,343.1 330,344.8 331,345.4 332,340.3 333,340.2 334,345.7 335,342.4 336,344.7 337,340.6 338,341.6 339,345.7 340,342.9 341,345.7 342,343.4 343,339.1 344,345.9 345,342.2 346,343.8 347,339.2 348,344.6 349,336.4 350,341.6 351,341.6 352,340.0 353,338.8 354,340.0 355,334.9 356,338.6 357,341.6 358,341.3 359,345.3 360,343.6 361,344.6 362,334.2 363,344.6 364,339.1 365,340.5 366,341.0 367,344.4 368,334.7 369,344.1 370,341.1 371,344.1 372,343.9 373,338.1 374,340.3 375,343.6 376,337.4 377,341.5 378,340.6 379,337.2 380,342.0 381,342.0 382,336.8 383,337.3 384,333.1 385,340.4 386,337.0 387,341.1 388,341.5 389,343.8 390,335.6 391,343.2 392,338.1 393,339.2 394,337.1 395,343.9 396,342.0 397,341.9 398,336.7 399,342.0 400,340.5 401,341.7 402,338.7 403,339.1 404,339.7 405,340.1 406,342.6 407,342.7 408,340.5 409,341.7 410,339.3 411,338.7 412,338.4 413,337.8 414,339.1 415,339.7 416,341.5 417,339.3 418,334.0 419,340.5 420,341.4 421,339.3 422,335.3 423,337.0 424,342.6 425,334.9 426,340.0 427,337.1 428,341.2 429,337.0 430,340.2 431,337.5 432,336.0 433,338.7 434,336.8" fill="none" stroke="#ff00ff" stroke-width="1.15" shape-rendering="auto"/>
  <rect x="434" y="303" width="1" height="134" fill="#d4d4d4"/>
</svg>
<div class="tk" style="right:599px;top:133px">20</div>
<div class="tk" style="right:599px;top:160px">16</div>
<div class="tk" style="right:599px;top:187px">12</div>
<div class="tk" style="right:599px;top:214px">8</div>
<div class="tk" style="right:599px;top:240px">4</div>
<div class="tk" style="left:471px;top:133px">16</div>
<div class="tk" style="left:471px;top:150px">14</div>
<div class="tk" style="left:471px;top:167px">12</div>
<div class="tk" style="left:471px;top:183px">10</div>
<div class="tk" style="left:471px;top:200px">8</div>
<div class="tk" style="left:471px;top:217px">6</div>
<div class="tk" style="left:471px;top:234px">4</div>
<div class="tk" style="left:471px;top:250px">2</div>
<div class="tk xc" style="left:38px;top:277px">0.0</div>
<div class="tk xc" style="left:84px;top:277px">0.5</div>
<div class="tk xc" style="left:130px;top:277px">1.0</div>
<div class="tk xc" style="left:177px;top:277px">1.5</div>
<div class="tk xc" style="left:223px;top:277px">2.0</div>
<div class="tk xc" style="left:270px;top:277px">2.5</div>
<div class="tk xc" style="left:316px;top:277px">3.0</div>
<div class="tk xc" style="left:363px;top:277px">3.5</div>
<div class="tk xc" style="left:409px;top:277px">4.0</div>
<div class="tk xc" style="left:456px;top:277px">4.5</div>
<div class="tk" style="right:599px;top:295px">10</div>
<div class="tk" style="right:599px;top:322px">8</div>
<div class="tk" style="right:599px;top:349px">6</div>
<div class="tk" style="right:599px;top:375px">4</div>
<div class="tk" style="right:599px;top:402px">2</div>
<div class="tk" style="left:471px;top:295px">10</div>
<div class="tk" style="left:471px;top:322px">8</div>
<div class="tk" style="left:471px;top:349px">6</div>
<div class="tk" style="left:471px;top:375px">4</div>
<div class="tk" style="left:471px;top:402px">2</div>
<div class="tk xc" style="left:38px;top:439px">0.0</div>
<div class="tk xc" style="left:84px;top:439px">0.5</div>
<div class="tk xc" style="left:130px;top:439px">1.0</div>
<div class="tk xc" style="left:177px;top:439px">1.5</div>
<div class="tk xc" style="left:223px;top:439px">2.0</div>
<div class="tk xc" style="left:270px;top:439px">2.5</div>
<div class="tk xc" style="left:316px;top:439px">3.0</div>
<div class="tk xc" style="left:363px;top:439px">3.5</div>
<div class="tk xc" style="left:409px;top:439px">4.0</div>
<div class="tk xc" style="left:456px;top:439px">4.5</div>

<!-- bottom groups -->
<div class="grp sq" style="left:14px;top:467px;width:146px;height:57px"><div class="lg blk" style="background:#f5f4ef"><span class="sw" style="background:#00e8e8"></span><span class="c" style="transform:scaleX(0.9446);transform-origin:0 50%">PI Errors</span></div></div>
<div class="t" style="transform:scaleX(0.9936);left:22px;top:477px">Durchschnitt</div><div class="v r" style="transform:scaleX(1.0153);right:490.7px;top:477px">6.63</div>
<div class="t" style="transform:scaleX(0.9313);left:22px;top:492px">Maximum:</div><div class="v r" style="transform:scaleX(1.0000);right:490.7px;top:492px">16</div>
<div class="t" style="transform:scaleX(0.9500);left:22px;top:507px">Gesamt:</div><div class="v r" style="transform:scaleX(0.9969);right:490.7px;top:507px">74663</div>

<div class="grp sq" style="left:173px;top:467px;width:146px;height:57px"><div class="lg blk" style="background:#f5f4ef"><span class="sw" style="background:#f4f400"></span><span class="c" style="transform:scaleX(0.9415);transform-origin:0 50%">PI Failures</span></div></div>
<div class="t" style="transform:scaleX(0.9936);left:180.8px;top:477px">Durchschnitt</div><div class="v r" style="transform:scaleX(1.0270);right:331px;top:477px">0.13</div>
<div class="t" style="transform:scaleX(0.9313);left:180.8px;top:492px">Maximum:</div><div class="v r" style="transform:scaleX(1.0612);right:331px;top:492px">8</div>
<div class="t" style="transform:scaleX(0.9500);left:180.8px;top:507px">Gesamt:</div><div class="v r" style="transform:scaleX(1.0108);right:331px;top:507px">1414</div>

<div class="grp sq" style="left:331px;top:467px;width:147px;height:43px"><div class="lg blk" style="background:#f5f4ef"><span class="sw" style="background:#f000f0"></span><span class="c" style="transform:scaleX(0.9751);transform-origin:0 50%">Jitter</span></div></div>
<div class="t" style="transform:scaleX(0.9936);left:340px;top:477px">Durchschnitt</div><div class="v r" style="transform:scaleX(0.9562);right:172.9px;top:477px">6.71 %</div>
<div class="t" style="transform:scaleX(0.9313);left:340px;top:492px">Maximum:</div><div class="v r" style="transform:scaleX(0.9861);right:172.9px;top:492px">8.0 %</div>
<div class="t" style="transform:scaleX(0.9621);left:340px;top:510.5px">PO Ausfälle:</div><div class="v r" style="transform:scaleX(1.0612);right:172.9px;top:510.5px">0</div>

<!-- right column -->
<div class="grp" style="left:491px;top:135px;width:140px;height:84px"><div class="lg" style="background:#fcfcfc"><span class="c" style="transform:scaleX(0.9849);transform-origin:0 50%">Disk-Info</span></div></div>
<div class="t" style="transform:scaleX(1.0098);left:499.2px;top:142.5px">Typ:</div><div class="v" style="transform:scaleX(0.9758);left:545px;top:142.5px">DVD-R</div>
<div class="t" style="transform:scaleX(0.9600);left:499.2px;top:160px">ID:</div><div class="v" style="transform:scaleX(0.9918);left:545px;top:160px">RITEKG04</div>
<div class="t" style="transform:scaleX(0.9445);left:499.2px;top:177.5px">Datum:</div><div class="v" style="transform:scaleX(0.9942);left:545px;top:177.5px">15 Apr 2006</div>
<div class="t" style="transform:scaleX(0.9672);left:499.2px;top:195.5px">Label:</div><div class="v" style="left:545px;top:195.5px">-</div>

<div class="grp" style="left:491px;top:226px;width:140px;height:203px"><div class="lg" style="background:#fafaf8"><span class="c" style="transform:scaleX(0.9688);transform-origin:0 50%">Einstellungen</span></div></div>
<div class="t" style="transform:scaleX(0.9681);left:499.2px;top:234px">Geschwindigkeit:</div>
<div class="combo" style="left:500px;top:250px;width:84px;height:21px"><div class="t" style="transform:scaleX(0.9991);left:3.5px;top:3px">8 X</div>
  <div class="dd" style="left:66px;top:1px"><svg width="13" height="15" viewBox="0 0 13 15"><path d="M3 6l3.5 3.5L10 6" stroke="#4d6185" stroke-width="2" fill="none"/></svg></div></div>
<div class="abs" style="left:592px;top:248px;width:23px;height:23px;background:#ece9d8;border:1px solid #fff;border-right:2px solid #8f8c7c;border-bottom:2px solid #8f8c7c"><svg width="20" height="20" viewBox="0 0 20 20" style="display:block"><rect x="3.6" y="2.8" width="13" height="15" fill="#fff" stroke="#000" stroke-width="1.4"/><path d="M6.6 10.2V7.6H11M14 9.6V12.6H9.4" stroke="#009400" stroke-width="1.2" fill="none"/><path d="M10.4 5L13.6 7.6L10.4 10.2ZM10 10L6.8 12.6L10 15.2Z" fill="#009400"/></svg></div>
<div class="t" style="transform:scaleX(0.9507);left:502.8px;top:280.5px">Start:</div><div class="inp" style="left:554px;top:276px;width:60px;height:20px"><span class="c" style="transform:scaleX(0.9482);transform-origin:0 50%">0000 MB</span></div>
<div class="t" style="transform:scaleX(0.9565);left:502.8px;top:302.5px">Ende:</div><div class="inp" style="left:554px;top:299px;width:60px;height:20px"><span class="c" style="transform:scaleX(0.9482);transform-origin:0 50%">4262 MB</span></div>

<div class="chk" style="left:502px;top:324px"></div><div class="t" style="transform:scaleX(0.9847);left:518px;top:324px">Schnelles Scannen</div>
<div class="chk" style="left:502px;top:345px"><svg width="9" height="9" viewBox="0 0 9 9"><path d="M1 4l2.5 2.5L8 1.5" stroke="#21a121" stroke-width="2" fill="none"/></svg></div><div class="t" style="transform:scaleX(0.9902);left:518px;top:345px">C1/PIE anzeigen</div>
<div class="chk" style="left:502px;top:361px"><svg width="9" height="9" viewBox="0 0 9 9"><path d="M1 4l2.5 2.5L8 1.5" stroke="#21a121" stroke-width="2" fill="none"/></svg></div><div class="t" style="transform:scaleX(0.9825);left:518px;top:361px">C2/PIF anzeigen</div>
<div class="chk" style="left:502px;top:378px"><svg width="9" height="9" viewBox="0 0 9 9"><path d="M1 4l2.5 2.5L8 1.5" stroke="#21a121" stroke-width="2" fill="none"/></svg></div><div class="t" style="transform:scaleX(0.9644);left:517.5px;top:378px">Jitter anzeigen</div>
<div class="chk" style="left:502px;top:394px"><svg width="9" height="9" viewBox="0 0 9 9"><path d="M1 4l2.5 2.5L8 1.5" stroke="#21a121" stroke-width="2" fill="none"/></svg></div><div class="t" style="transform:scaleX(0.9802);left:518px;top:394px">Lesegeschwindigkeit a</div>
<div class="chk" style="left:502px;top:410px;border-color:#cac8bb;background:#fff"><svg width="9" height="9" viewBox="0 0 9 9"><path d="M1 4l2.5 2.5L8 1.5" stroke="#cac8bb" stroke-width="2" fill="none"/></svg></div><div class="abs" style="left:518px;top:410px;width:110px;height:14px;overflow:hidden"><div class="t" style="transform:scaleX(0.9787);left:0;top:0;color:#aca899">Schreibgeschwindigkeit</div></div>

<div class="grp" style="left:491px;top:436px;width:140px;height:26px"></div>
<div class="t" style="transform:scaleX(0.9414);left:502.3px;top:441.5px">Qualitätsindex:</div><div class="v r" style="transform:scaleX(1.0204);right:20px;top:441.5px">95</div>
<div class="grp" style="left:491px;top:467px;width:140px;height:57px"></div>
<div class="t" style="transform:scaleX(0.9383);left:502.3px;top:475.5px">Fortschritt:</div><div class="v r" style="transform:scaleX(0.9534);right:19px;top:475.5px">100 %</div>
<div class="t" style="transform:scaleX(0.9419);left:502.3px;top:491.5px">Position:</div><div class="v r" style="transform:scaleX(0.9595);right:19.5px;top:491.5px">4261 MB</div>
<div class="t" style="transform:scaleX(0.9681);left:502.3px;top:506.5px">Geschwindigkeit:</div><div class="v r" style="transform:scaleX(1.0059);right:19px;top:506.5px">8.19 X</div>
</div>
</body></html>
